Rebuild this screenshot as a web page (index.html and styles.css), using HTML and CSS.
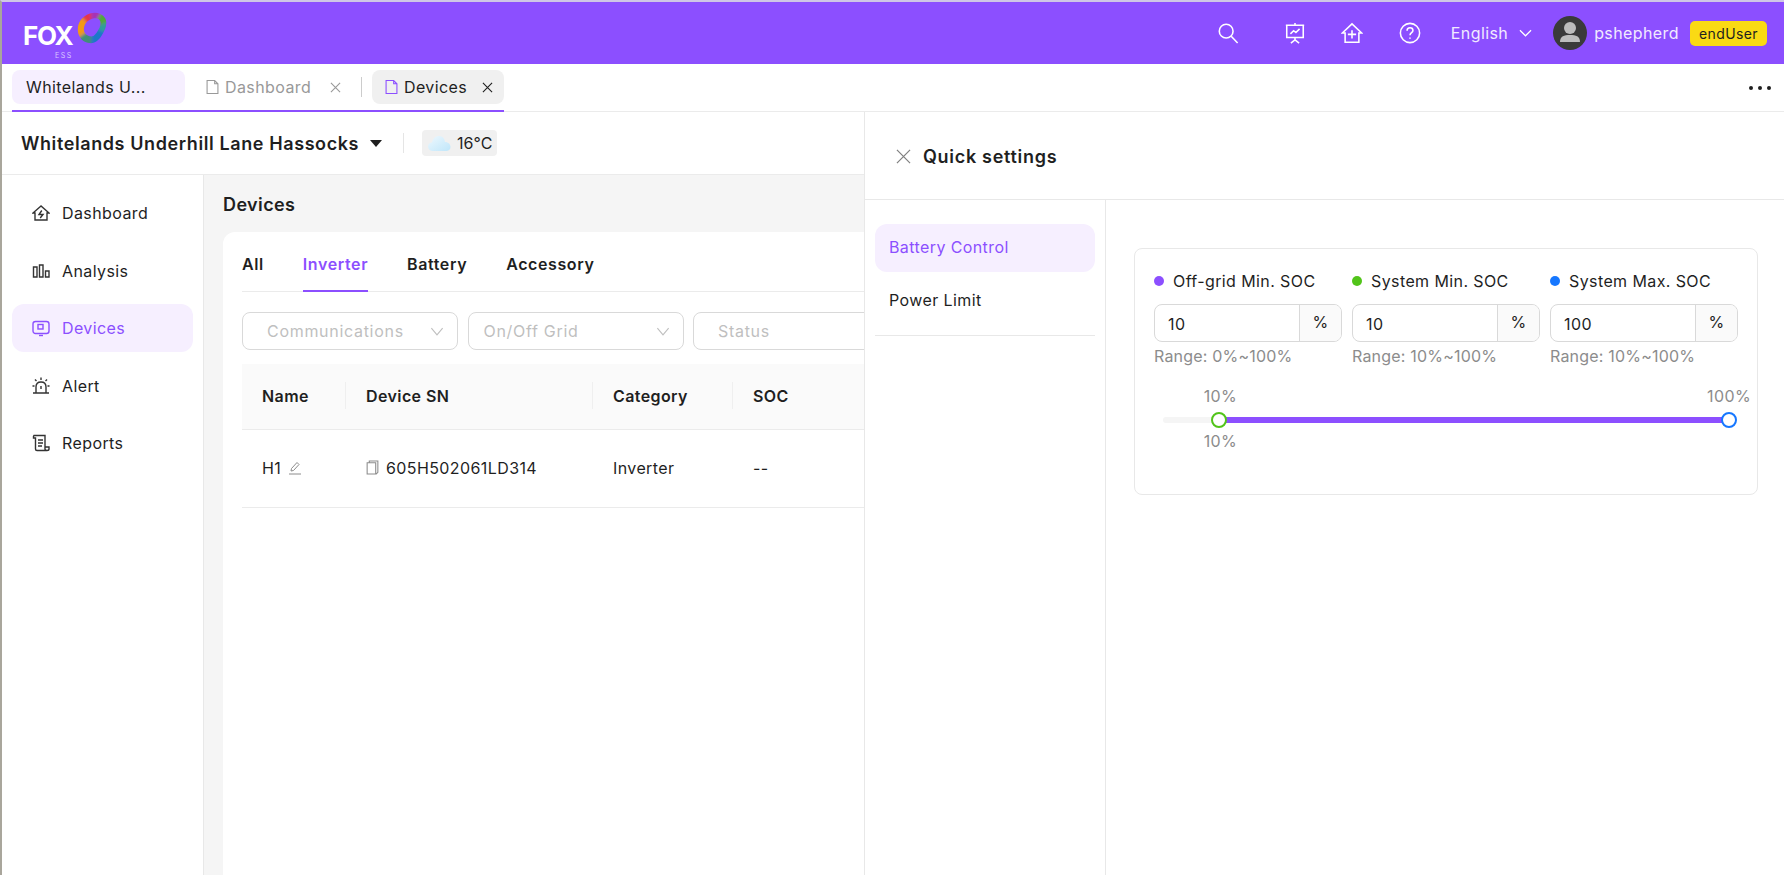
FILE: index.html
```html
<!DOCTYPE html>
<html lang="en">
<head>
	<meta charset="UTF-8">
	<title>Devices</title>
	<link rel="stylesheet" href="styles.css">
</head>
<body>
	<div class="app">
		<header class="topbar">
			<div class="logo">
				<span class="logo-fox">FOX</span>
				<span class="logo-ess">ESS</span>
				<svg class="logo-mark" viewBox="0 0 30 32">
					<defs>
						<mask id="ring">
							<path d="M13 1.500C18 -0.500 25 1 28 6C31 11 28.500 17 25 23C22 28 18 32 12 31C6 30 2 26 1 20C0 13 3 5 13 1.500Z" fill="#fff"/>
							<path d="M16 6.500C20 5.500 23 7 23.500 10C24 14 21 20 16.500 24C12.500 25.500 8.500 23 7 19C6 13 10 8 16 6.500Z" fill="#000"/>
						</mask>
						<filter id="soft"><feGaussianBlur stdDeviation="1.400"/></filter>
					</defs>
					<g mask="url(#ring)">
						<g filter="url(#soft)">
							<path d="M15 16L-2 -2H14Z" fill="#e2344f"/>
							<path d="M15 16L14 -2H26Z" fill="#a832b5"/>
							<path d="M15 16L26 -2H32V10Z" fill="#4fa83c"/>
							<path d="M15 16L32 10V22Z" fill="#2f9c9c"/>
							<path d="M15 16L32 22V34H14Z" fill="#1c78c8"/>
							<path d="M15 16L14 34H-2V28Z" fill="#3f8f78"/>
							<path d="M15 16L-2 28V-2Z" fill="#f29a18"/>
						</g>
					</g>
				</svg>
			</div>
			<div class="topbar-right">
				<svg class="top-icon icon-search" viewBox="0 0 24 24"><circle cx="10" cy="10" r="7.500"/><path d="M15.500 15.500L22.500 23"/></svg>
				<svg class="top-icon icon-board" viewBox="0 0 24 24"><path d="M12 1V3M2 3.500H22M3 3.500V17H21V3.500M12 17V20M12 19.500L7.500 23M12 19.500L16.500 23M7 13L10.500 9.500L13 11.500L17 7.500"/></svg>
				<svg class="top-icon icon-home" viewBox="0 0 24 24"><path d="M12 2L1.500 12H4.500V22H19.500V12H22.500ZM12 9V18M7.500 13.500H16.500"/></svg>
				<svg class="top-icon icon-help" viewBox="0 0 24 24"><circle cx="12" cy="12" r="10.500"/><path d="M8.800 9.500C8.800 7.500 10.300 6.300 12 6.300C13.800 6.300 15.200 7.500 15.200 9.200C15.200 11.500 12 11.800 12 14.500M12 16.800V18.300"/></svg>
				<span class="lang">English</span>
				<svg class="lang-arrow" viewBox="0 0 14 8"><path d="M1 1L7 7L13 1"/></svg>
				<span class="avatar">
					<svg viewBox="0 0 34 34"><circle cx="17" cy="12" r="6" fill="#bdbdbd"/><path d="M7 26C7 20 11 19 17 19C23 19 27 20 27 26Z" fill="#bdbdbd"/></svg>
				</span>
				<span class="username">pshepherd</span>
				<span class="role">endUser</span>
			</div>
		</header>

		<nav class="tabbar">
			<div class="tabs">
				<div class="tab tab-site">Whitelands U...</div>
				<div class="tab tab-plain">
					<svg class="page-icon" viewBox="0 0 12 14"><path d="M1 1H8L11 4V13H1ZM8 1V4H11"/></svg>
					<span>Dashboard</span>
					<svg class="close-x" viewBox="0 0 12 12"><path d="M1 1L11 11M11 1L1 11"/></svg>
				</div>
				<span class="tab-sep"></span>
				<div class="tab tab-active">
					<svg class="page-icon" viewBox="0 0 12 14"><path d="M1 1H8L11 4V13H1ZM8 1V4H11"/></svg>
					<span>Devices</span>
					<svg class="close-x" viewBox="0 0 12 12"><path d="M1 1L11 11M11 1L1 11"/></svg>
				</div>
			</div>
			<div class="more"><i></i><i></i><i></i></div>
		</nav>

		<div class="sitebar">
			<span class="site-name">Whitelands Underhill Lane Hassocks</span>
			<span class="site-arrow"></span>
			<span class="site-sep"></span>
			<span class="weather">
				<svg viewBox="0 0 24 18"><defs><linearGradient id="cloud" x1="0" y1="0" x2="1" y2="1"><stop offset="0" stop-color="#eef8fe"/><stop offset="1" stop-color="#bfe6fa"/></linearGradient></defs><path d="M6 17C3 17 1 15 1 12.500C1 10 3 8.500 5 8.500C6 4 9 2 12 2C15 2 17.500 4 18 8C21.500 8 23.500 10.500 23.500 13C23.500 15.500 21.500 17 19 17Z" fill="url(#cloud)"/></svg>
				16°C
			</span>
		</div>

		<div class="body">
			<aside class="sidebar">
				<a class="side-item">
					<svg viewBox="0 0 18 18"><path d="M9 2L1 9H3V16H15V9H17ZM9.800 6.500L7 10.500H11L8.200 14"/></svg>
					Dashboard
				</a>
				<a class="side-item">
					<svg viewBox="0 0 18 18"><path d="M1.500 5H5V15H1.500ZM7.500 3H11V15H7.500ZM13.500 9H17V15H13.500Z"/></svg>
					Analysis
				</a>
				<a class="side-item active">
					<svg viewBox="0 0 18 18"><rect x="1" y="2.500" width="16" height="12" rx="2.500"/><rect x="6" y="5.500" width="5" height="4.500"/><path d="M7 16.500H11"/></svg>
					Devices
				</a>
				<a class="side-item">
					<svg viewBox="0 0 18 18"><path d="M1 16H17M4 16V10C4 7 6 5 9 5C12 5 14 7 14 10V16M9 9V12M9 0.500V3M3 2.500L4.500 4M15 2.500L13.500 4M0.500 9H2.500M15.500 9H17.500"/></svg>
					Alert
				</a>
				<a class="side-item">
					<svg viewBox="0 0 18 18"><path d="M2 1.500H13V15C13 16 14 16.500 15 16.500H5C4 16.500 3.500 16 3.500 15V4H1.500V2.500ZM6 6H11M6 9H11M6 12H10M13 13H17V15C17 16 16 16.500 15 16.500"/></svg>
					Reports
				</a>
			</aside>

			<main class="content">
				<h2 class="page-title">Devices</h2>
				<section class="card">
					<div class="kinds">
						<span class="kind">All</span>
						<span class="kind current">Inverter</span>
						<span class="kind">Battery</span>
						<span class="kind">Accessory</span>
					</div>
					<div class="filters">
						<div class="filter">
							<span class="filter-text pad-wide">Communications</span>
							<svg class="filter-arrow" viewBox="0 0 12 8"><path d="M1 1L6 7L11 1"/></svg>
						</div>
						<div class="filter">
							<span class="filter-text">On/Off Grid</span>
							<svg class="filter-arrow" viewBox="0 0 12 8"><path d="M1 1L6 7L11 1"/></svg>
						</div>
						<div class="filter">
							<span class="filter-text pad-wide">Status</span>
							<svg class="filter-arrow" viewBox="0 0 12 8"><path d="M1 1L6 7L11 1"/></svg>
						</div>
					</div>
					<div class="row row-head">
						<div class="cell col-name">Name</div>
						<div class="cell col-sn">Device SN</div>
						<div class="cell col-cat">Category</div>
						<div class="cell col-soc">SOC</div>
					</div>
					<div class="row">
						<div class="cell col-name">
							H1
							<svg class="edit-icon" viewBox="0 0 14 14"><path d="M1 13H13M3 10L3.500 7.500L9 1.500L11 3.500L5.500 9.500Z"/></svg>
						</div>
						<div class="cell col-sn">
							<svg class="copy-icon" viewBox="0 0 12 14"><path d="M3 2.500V1H11V11.500L9.500 13H1V2.500H9V13"/></svg>
							605H502061LD314
						</div>
						<div class="cell col-cat">Inverter</div>
						<div class="cell col-soc">--</div>
					</div>
				</section>
			</main>
		</div>

		<aside class="drawer">
			<div class="drawer-head">
				<svg class="drawer-close" viewBox="0 0 16 16"><path d="M1 1L15 15M15 1L1 15"/></svg>
				<span class="drawer-title">Quick settings</span>
			</div>
			<div class="drawer-body">
				<div class="drawer-menu">
					<div class="drawer-links">
						<a class="drawer-link active">Battery Control</a>
						<a class="drawer-link">Power Limit</a>
					</div>
				</div>
				<div class="drawer-main">
					<section class="soc-card">
						<div class="soc-fields">
							<div class="soc-field">
								<div class="soc-label"><i class="dot dot-purple"></i>Off-grid Min. SOC</div>
								<div class="soc-input"><span class="soc-value">10</span><span class="soc-unit">%</span></div>
								<div class="soc-range">Range: 0%~100%</div>
							</div>
							<div class="soc-field">
								<div class="soc-label"><i class="dot dot-green"></i>System Min. SOC</div>
								<div class="soc-input"><span class="soc-value">10</span><span class="soc-unit">%</span></div>
								<div class="soc-range">Range: 10%~100%</div>
							</div>
							<div class="soc-field">
								<div class="soc-label"><i class="dot dot-blue"></i>System Max. SOC</div>
								<div class="soc-input"><span class="soc-value">100</span><span class="soc-unit">%</span></div>
								<div class="soc-range">Range: 10%~100%</div>
							</div>
						</div>
						<div class="slider">
							<div class="slider-fill"></div>
							<span class="slider-mark mark-low-top">10%</span>
							<span class="slider-mark mark-low-bottom">10%</span>
							<span class="slider-mark mark-high">100%</span>
							<span class="handle handle-low"></span>
							<span class="handle handle-high"></span>
						</div>
					</section>
				</div>
			</div>
		</aside>
	</div>
</body>
</html>
```

FILE: styles.css
```css
*{padding: 0;margin: 0;box-sizing: border-box;}
html,body{
	height: 100%;
	overflow: hidden;
}
body{
	font-family: "Inter", "Liberation Sans", sans-serif;
	font-size: 16px;
	letter-spacing: .4px;
	color: #1f1f1f;
	background-color: #fff;
}
svg{
	fill: none;
	stroke: currentColor;
	flex-shrink: 0;
}
.app{
	height: 875px;
	position: relative;
	display: flex;
	flex-direction: column;
	border-left: 2px solid #a9a69c;
	border-top: 2px solid #cfc6e6;
	overflow: hidden;
}

/* top bar */
.topbar{
	height: 62px;
	flex-shrink: 0;
	background-color: #8c4fff;
	display: flex;
	align-items: center;
	justify-content: space-between;
	color: #fff;
}
.logo{
	position: relative;
	width: 110px;
	height: 62px;
}
.logo-fox{
	position: absolute;
	left: 21px;
	top: 23px;
	font-size: 26px;
	line-height: 21px;
	font-weight: 700;
	letter-spacing: -1.200px;
}
.logo-ess{
	position: absolute;
	left: 53px;
	top: 50px;
	font-size: 7px;
	line-height: 8px;
	letter-spacing: 1.500px;
	color: #d9c6ff;
}
.logo-mark{
	position: absolute;
	left: 75px;
	top: 10px;
	width: 30px;
	height: 32px;
	stroke: none;
}
.topbar-right{
	display: flex;
	align-items: center;
	padding-right: 17px;
}
.top-icon{
	width: 22px;
	height: 22px;
	stroke-width: 1.700;
}
.icon-search{margin-right: 45px;}
.icon-board{margin-right: 35px;}
.icon-home{margin-right: 36px;}
.icon-help{margin-right: 30px;}
.lang{
	font-size: 16px;
	color: #f1eaff;
}
.lang-arrow{
	width: 13px;
	height: 8px;
	margin: 0 21px 0 11px;
	stroke-width: 1.300;
}
.avatar{
	width: 34px;
	height: 34px;
	border-radius: 50%;
	background-color: #3a3a3a;
	overflow: hidden;
	margin-right: 7px;
}
.avatar svg{
	display: block;
	stroke: none;
}
.username{
	font-size: 16px;
	margin-right: 11px;
	color: #f1eaff;
}
.role{
	height: 25px;
	line-height: 25px;
	padding: 0 9px;
	border-radius: 5px;
	background-color: #fada14;
	color: #1f1f1f;
	font-size: 14px;
}

/* tab bar */
.tabbar{
	height: 48px;
	flex-shrink: 0;
	padding-left: 10px;
	display: flex;
	justify-content: space-between;
	border-bottom: 1px solid #ebebeb;
}
.tabs{
	height: 48px;
	display: flex;
	align-items: center;
	border-bottom: 2px solid #8c4fff;
}
.tab{
	height: 34px;
	display: flex;
	align-items: center;
	border-radius: 8px;
}
.tab-site{
	width: 173px;
	padding-left: 14px;
	background-color: #f6efff;
	color: #1f1f1f;
}
.tab-plain{
	width: 176px;
	padding-left: 21px;
	color: #999;
}
.tab-active{
	width: 132px;
	padding-left: 13px;
	background-color: #f0f0f0;
}
.page-icon{
	width: 13px;
	height: 16px;
	margin-right: 6px;
	stroke-width: 1;
}
.tab-active .page-icon{
	color: #8c4fff;
}
.close-x{
	width: 11px;
	height: 11px;
	margin-left: auto;
	margin-right: 11px;
	stroke-width: 1.200;
}
.tab-plain .close-x{
	margin-right: 20px;
}
.tab-sep{
	width: 1px;
	height: 20px;
	margin-right: 10px;
	background-color: #ccc;
}
.more{
	display: flex;
	align-items: center;
	gap: 5px;
	padding-right: 13px;
	height: 48px;
}
.more i{
	width: 4px;
	height: 4px;
	border-radius: 50%;
	background-color: #1f1f1f;
}

/* site row */
.sitebar{
	height: 63px;
	flex-shrink: 0;
	padding-left: 19px;
	display: flex;
	align-items: center;
	border-bottom: 1px solid #ebebeb;
}
.site-name{
	font-size: 18px;
	font-weight: 600;
	letter-spacing: .6px;
}
.site-arrow{
	margin-left: 11px;
	border-top: 7px solid #1f1f1f;
	border-left: 6px solid transparent;
	border-right: 6px solid transparent;
}
.site-sep{
	width: 1px;
	height: 20px;
	margin: 0 18px 0 21px;
	background-color: #e5e5e5;
}
.weather{
	height: 26px;
	padding: 0 5px;
	display: flex;
	align-items: center;
	gap: 6px;
	font-size: 16px;
	letter-spacing: 0;
	border-radius: 4px;
	background-color: #f0f0f0;
}
.weather svg{
	width: 24px;
	height: 18px;
	stroke: none;
}

/* main area */
.body{
	flex: 1;
	display: flex;
	min-height: 0;
}
.sidebar{
	width: 202px;
	flex-shrink: 0;
	padding: 14px 10px 0;
	border-right: 1px solid #e8e8e8;
}
.side-item{
	height: 48px;
	margin-bottom: 9.600px;
	padding-left: 20px;
	display: flex;
	align-items: center;
	gap: 12px;
	border-radius: 12px;
}
.side-item svg{
	width: 18px;
	height: 18px;
	stroke-width: 1.400;
	color: #333;
}
.side-item.active{
	background-color: #f6efff;
	color: #8c4fff;
}
.side-item.active svg{
	color: #8c4fff;
}
.content{
	flex: 1;
	min-width: 0;
	padding: 19px 0 0 19px;
	background-color: #f5f5f5;
}
.page-title{
	font-size: 18px;
	line-height: 22px;
	font-weight: 600;
	margin-bottom: 16px;
}
.card{
	height: 700px;
	padding: 0 19px;
	background-color: #fff;
	border-radius: 12px 0 0 0;
}
.kinds{
	height: 60px;
	display: flex;
	gap: 39px;
	border-bottom: 1px solid #ebebeb;
}
.kind{
	height: 60px;
	line-height: 65px;
	font-size: 16px;
	font-weight: 600;
	letter-spacing: .6px;
}
.kind.current{
	color: #8c4fff;
	border-bottom: 2px solid #8c4fff;
}
.filters{
	margin-top: 20px;
	display: flex;
	gap: 9.500px;
}
.filter{
	width: 216px;
	height: 38px;
	flex-shrink: 0;
	padding-right: 13px;
	display: flex;
	align-items: center;
	justify-content: space-between;
	border: 1px solid #d9d9d9;
	border-radius: 8px;
	color: #bfbfbf;
	letter-spacing: .7px;
}
.filter-text{
	padding-left: 15px;
}
.filter-text.pad-wide{
	padding-left: 24px;
}
.filter-arrow{
	width: 14px;
	height: 9px;
	stroke-width: 1;
}
.row{
	height: 78px;
	padding-bottom: 2px;
	display: flex;
	align-items: center;
	border-bottom: 1px solid #ebebeb;
}
.row-head{
	height: 66px;
	margin-top: 14px;
	background-color: #fafafa;
	font-weight: 600;
}
.cell{
	height: 27px;
	display: flex;
	align-items: center;
	padding-left: 20px;
	flex-shrink: 0;
}
.row-head .cell{
	border-right: 1px solid #efefef;
}
.col-name{width: 104px;}
.col-sn{width: 247px;}
.col-cat{width: 140px;}
.col-soc{width: 140px;}
.edit-icon{
	width: 14px;
	height: 14px;
	margin-left: 7px;
	color: #8c8c8c;
	stroke-width: 1;
}
.copy-icon{
	width: 13px;
	height: 15px;
	margin-right: 7px;
	color: #8c8c8c;
	stroke-width: 1;
}

/* quick settings, sits over the page */
.drawer{
	position: absolute;
	left: 862px;
	right: 0;
	top: 110px;
	bottom: 0;
	display: flex;
	flex-direction: column;
	background-color: #fff;
	border-left: 1px solid #e8e8e8;
}
.drawer-head{
	height: 88px;
	flex-shrink: 0;
	padding: 2px 0 0 31px;
	display: flex;
	align-items: center;
	gap: 12px;
	border-bottom: 1px solid #e8e8e8;
}
.drawer-close{
	width: 15px;
	height: 15px;
	color: #808080;
	stroke-width: 1.300;
}
.drawer-title{
	font-size: 18px;
	font-weight: 600;
	letter-spacing: .7px;
}
.drawer-body{
	flex: 1;
	display: flex;
}
.drawer-menu{
	width: 241px;
	flex-shrink: 0;
	padding: 24px 10px 0 10px;
	border-right: 1px solid #e8e8e8;
}
.drawer-links{
	padding-bottom: 5px;
	border-bottom: 1px solid #e8e8e8;
}
.drawer-link{
	display: block;
	height: 48px;
	margin-bottom: 5px;
	padding-left: 14px;
	line-height: 46px;
	border-radius: 12px;
}
.drawer-link.active{
	background-color: #f6efff;
	color: #8c4fff;
}
.drawer-main{
	flex: 1;
	padding: 48px 31px 0 28px;
}
.soc-card{
	height: 247px;
	padding: 20px 19px 0;
	border: 1px solid #e8e8e8;
	border-radius: 8px;
}
.soc-fields{
	display: flex;
	gap: 10px;
}
.soc-field{
	width: 188px;
}
.soc-label{
	height: 24px;
	margin-bottom: 11px;
	display: flex;
	align-items: center;
	gap: 9px;
}
.dot{
	width: 10px;
	height: 10px;
	border-radius: 50%;
}
.dot-purple{background-color: #8c4fff;}
.dot-green{background-color: #52c41a;}
.dot-blue{background-color: #1677ff;}
.soc-input{
	height: 38px;
	display: flex;
	border: 1px solid #d9d9d9;
	border-radius: 8px;
	overflow: hidden;
}
.soc-value{
	flex: 1;
	padding-left: 13px;
	line-height: 38px;
}
.soc-unit{
	width: 42px;
	text-align: center;
	line-height: 34px;
	background-color: #fafafa;
	border-left: 1px solid #d9d9d9;
}
.soc-range{
	margin-top: 2px;
	font-size: 16px;
	line-height: 24px;
	letter-spacing: .2px;
	color: #8c8c8c;
}
.slider{
	position: relative;
	height: 6px;
	margin: 49px 0 0 9px;
	width: 574px;
	border-radius: 3px;
	background-color: #f5f5f5;
}
.slider-fill{
	position: absolute;
	left: 10%;
	right: 8px;
	top: 0;
	bottom: 0;
	background-color: #8c4fff;
}
.slider-mark{
	position: absolute;
	font-size: 16px;
	line-height: 20px;
	color: #8c8c8c;
	transform: translateX(-50%);
}
.mark-low-top{left: 10%;top: -31px;}
.mark-low-bottom{left: 10%;top: 14px;}
.mark-high{left: 566px;top: -31px;}
.handle{
	position: absolute;
	top: -5px;
	width: 16px;
	height: 16px;
	border-radius: 50%;
	background-color: #fff;
	border: 2px solid #52c41a;
}
.handle-low{left: 48px;}
.handle-high{left: 558px;border-color: #1677ff;}
```
